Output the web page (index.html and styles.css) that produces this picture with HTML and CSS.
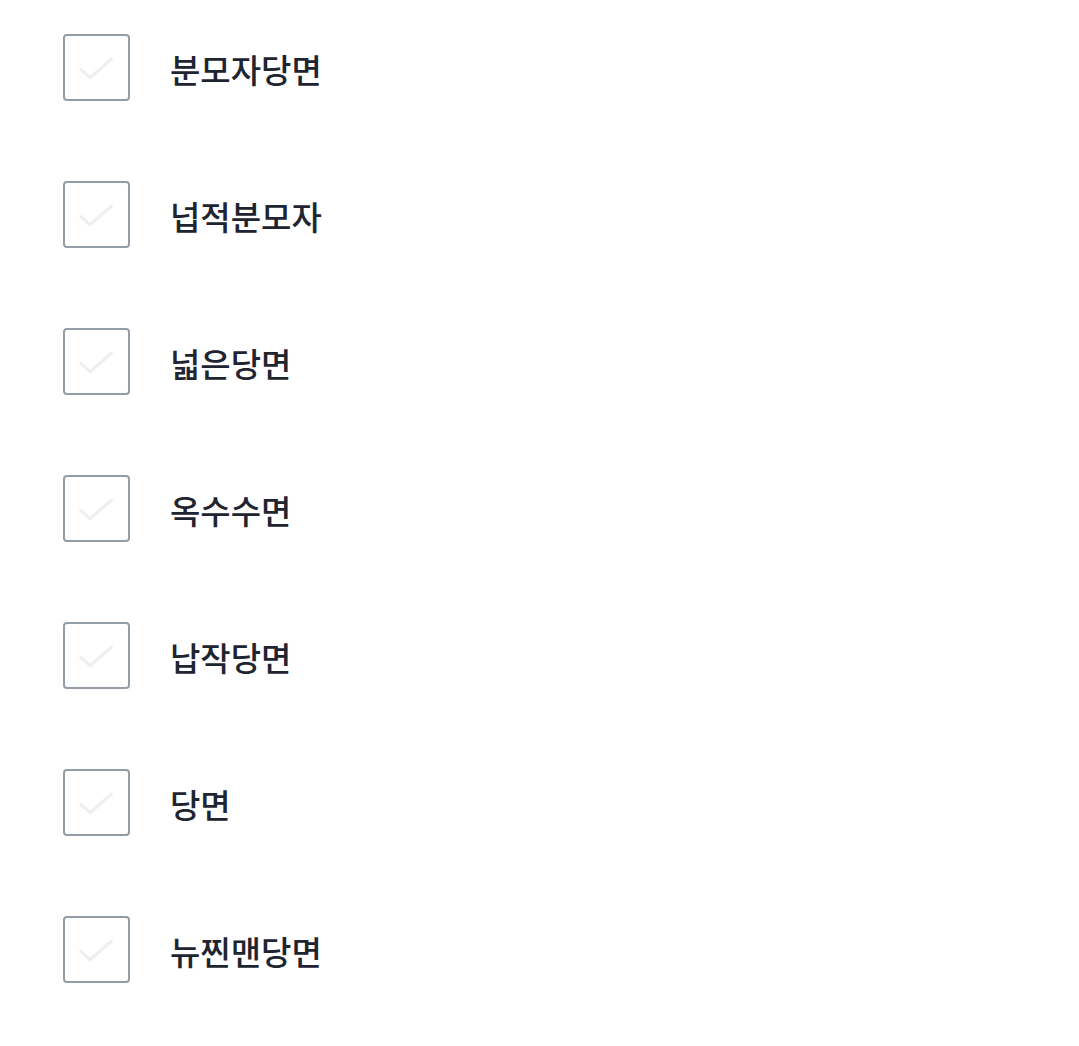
FILE: index.html
```html
<!DOCTYPE html>
<html lang="ko">
<head>
<meta charset="utf-8">
<link rel="stylesheet" href="styles.css">
</head>
<body>
<ul class="list">
  <li class="item"><span class="box"><svg viewBox="0 0 67 67" class="check"><path d="M16 35 L26 44 L49 24"/></svg></span><span class="label">분모자당면</span></li>
  <li class="item"><span class="box"><svg viewBox="0 0 67 67" class="check"><path d="M16 35 L26 44 L49 24"/></svg></span><span class="label">넙적분모자</span></li>
  <li class="item"><span class="box"><svg viewBox="0 0 67 67" class="check"><path d="M16 35 L26 44 L49 24"/></svg></span><span class="label">넓은당면</span></li>
  <li class="item"><span class="box"><svg viewBox="0 0 67 67" class="check"><path d="M16 35 L26 44 L49 24"/></svg></span><span class="label">옥수수면</span></li>
  <li class="item"><span class="box"><svg viewBox="0 0 67 67" class="check"><path d="M16 35 L26 44 L49 24"/></svg></span><span class="label">납작당면</span></li>
  <li class="item"><span class="box"><svg viewBox="0 0 67 67" class="check"><path d="M16 35 L26 44 L49 24"/></svg></span><span class="label">당면</span></li>
  <li class="item"><span class="box"><svg viewBox="0 0 67 67" class="check"><path d="M16 35 L26 44 L49 24"/></svg></span><span class="label">뉴찐맨당면</span></li>
</ul>
</body>
</html>
```
FILE: styles.css
```css
html, body {
  margin: 0;
  padding: 0;
  background: #ffffff;
}
.list {
  list-style: none;
  margin: 0;
  padding: 34px 0 0 63px;
  display: flex;
  flex-direction: column;
  gap: 80px;
}
.item {
  display: flex;
  align-items: center;
  gap: 40px;
  height: 67px;
}
.box {
  width: 67px;
  height: 67px;
  box-sizing: border-box;
  border: 2.5px solid #949da6;
  border-radius: 4px;
  display: flex;
  align-items: center;
  justify-content: center;
  flex: none;
}
.check {
  width: 62px;
  height: 62px;
}
.check path {
  fill: none;
  stroke: #efefef;
  stroke-width: 3.5;
  stroke-linecap: round;
  stroke-linejoin: round;
}
.label {
  font-family: "Noto Sans CJK KR", "Noto Sans", sans-serif;
  font-size: 33px;
  font-weight: 500;
  color: #1e2530;
  line-height: 1;
  padding-top: 4px;
}
```
